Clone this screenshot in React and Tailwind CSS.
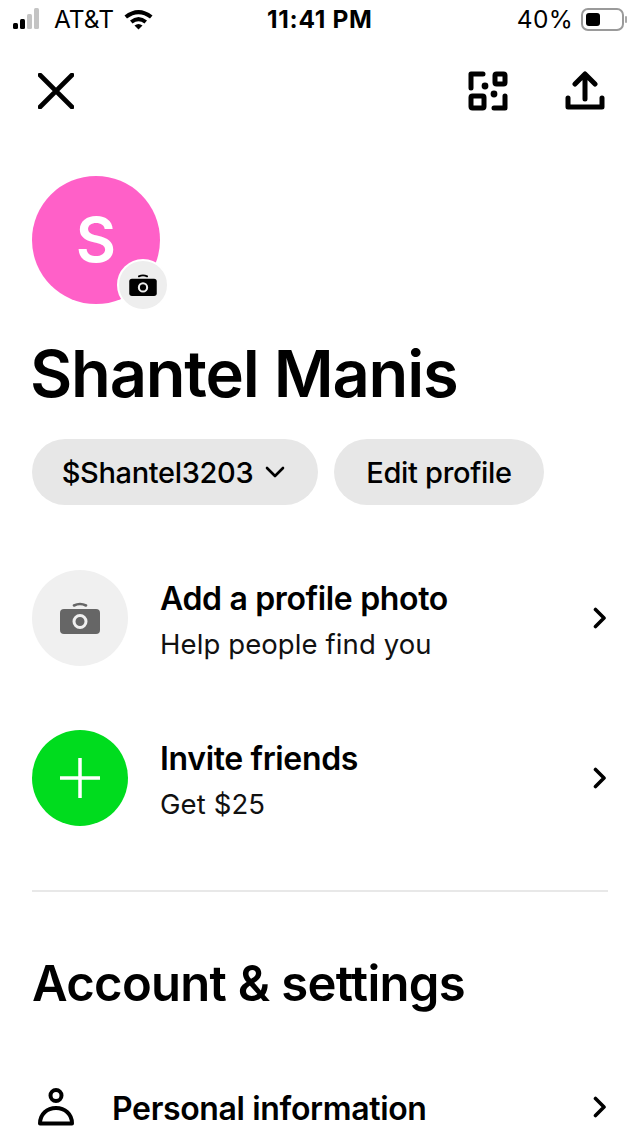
function Camera({ className, color, lens }) {
  return (
    <svg viewBox="0 0 40 32" className={className}>
      <path d="M14 3.5 Q20 0.5 26 3.5" fill="none" stroke={color} strokeWidth="2.6" strokeLinecap="round" />
      <rect x="0" y="7" width="40" height="25" rx="4" fill={color} />
      <circle cx="20" cy="19.5" r="6" fill="none" stroke={lens} strokeWidth="3" />
    </svg>
  );
}

function Chevron({ className }) {
  return (
    <svg viewBox="0 0 14 22" className={className} fill="none" stroke="#000" strokeWidth="3.6" strokeLinecap="round" strokeLinejoin="round">
      <path d="M2.5 2.5 L11 11 L2.5 19.5" />
    </svg>
  );
}

function StatusBar() {
  return (
    <div className="h-[40px] px-[13px] pt-[6px] relative flex items-start justify-between text-black text-[24.5px] leading-[26px]">
      <div className="flex items-center">
        <div className="flex items-end gap-[2px] h-[22px] mb-[2px] w-[33px]">
          <span className="w-[5px] h-[6px] rounded-[1.5px] bg-black" />
          <span className="w-[5px] h-[10px] rounded-[1.5px] bg-black" />
          <span className="w-[5px] h-[15px] rounded-[1.5px] bg-[#c4c4c4]" />
          <span className="w-[5px] h-[21px] rounded-[1.5px] bg-[#c4c4c4]" />
        </div>
        <span className="ml-[8px]">AT&amp;T</span>
        <svg viewBox="0 0 30 22" className="ml-[9px] w-[31px] h-[22px]">
          <path d="M1 7.5 Q15 -3.5 29 7.5 L26.5 10.5 Q15 2 3.5 10.5 Z" fill="#000" />
          <path d="M6.5 12.5 Q15 5.5 23.5 12.5 L21 15.5 Q15 11 9 15.5 Z" fill="#000" />
          <path d="M11 17.5 Q15 14.5 19 17.5 L15 21.5 Z" fill="#000" />
        </svg>
      </div>
      <span className="absolute left-[267px] top-[6px] font-bold tracking-[0.7px] whitespace-nowrap">11:41 PM</span>
      <div className="flex items-center">
        <span className="tracking-[0.3px] mr-[8px]">40%</span>
        <div className="w-[43px] h-[23px] rounded-[7px] border-2 border-[#9a9a9a] p-[3px]">
          <div className="w-[14px] h-full rounded-[3px] bg-black" />
        </div>
        <span className="ml-[1px] w-[2px] h-[7px] rounded-full bg-[#a8a8a8]" />
      </div>
    </div>
  );
}

function TopActions() {
  return (
    <div className="h-[102px] pl-[38px] pr-[35px] flex items-center justify-between">
      <svg viewBox="0 0 36 36" className="w-[36px] h-[36px]" fill="none" stroke="#000" strokeWidth="4.6" strokeLinecap="round">
        <path d="M2 2 L34 34 M34 2 L2 34" />
      </svg>
      <div className="flex items-center gap-[57px]">
        <svg viewBox="0 0 40 40" className="w-[40px] h-[40px]" fill="none" stroke="#000" strokeWidth="5">
          <path d="M3 17 V3 H15" strokeLinejoin="round" strokeLinecap="round" />
          <circle cx="17" cy="15" r="3.4" fill="#000" stroke="none" />
          <rect x="27" y="3" width="10" height="10" rx="1.5" />
          <rect x="3" y="25" width="13" height="12" rx="1.5" />
          <circle cx="26" cy="23" r="3.4" fill="#000" stroke="none" />
          <path d="M37 25 V37 H26" strokeLinejoin="round" strokeLinecap="round" />
        </svg>
        <svg viewBox="0 0 40 40" className="w-[40px] h-[40px]" fill="none" stroke="#000" strokeWidth="5" strokeLinecap="round" strokeLinejoin="round">
          <path d="M20 28 V4 M10 13 L20 3 L30 13" />
          <path d="M3 27 V36 H37 V27" />
        </svg>
      </div>
    </div>
  );
}

function ActionRow({ circle, title, subtitle }) {
  return (
    <div className="flex items-center h-[96px]">
      {circle}
      <div className="ml-[32px] flex-1 pt-[5px]">
        <div className="text-[32px] leading-[38px] font-semibold tracking-[-0.35px] text-black">{title}</div>
        <div className="text-[27.5px] leading-[36px] mt-[8px] tracking-[0.1px] text-[#111]">{subtitle}</div>
      </div>
      <Chevron className="w-[14px] h-[22px] mr-[1px]" />
    </div>
  );
}

export default function App() {
  return (
    <div className="relative w-[640px] h-[1136px] overflow-hidden bg-white text-black font-['Inter','Liberation_Sans',sans-serif]">
      <StatusBar />
      <TopActions />
      <div className="px-[32px]">
        <div className="relative w-[128px] h-[128px] mt-[34px] rounded-full bg-[#ff60c8] flex items-center justify-center">
          <span className="text-white text-[62px] leading-none font-semibold">S</span>
          <div className="absolute left-[85px] top-[83px] w-[52px] h-[52px] rounded-full bg-[#eeeeee] border-2 border-white flex items-center justify-center">
            <Camera className="w-[28px] h-[22px]" color="#000" lens="#eeeeee" />
          </div>
        </div>

        <h1 className="mt-[32px] -ml-[2px] text-[65px] leading-[76px] font-semibold tracking-[-1.2px] whitespace-nowrap">Shantel Manis</h1>

        <div className="mt-[27px] flex gap-[16px]">
          <div className="h-[66px] w-[286px] rounded-full bg-[#e7e7e7] flex items-center justify-center text-[29px] font-medium tracking-[-0.35px]">
            <span className="-ml-[3px] pt-[2px]">$Shantel3203</span>
            <svg viewBox="0 0 20 12" className="ml-[12px] w-[20px] h-[12px]" fill="none" stroke="#000" strokeWidth="2.6" strokeLinecap="round" strokeLinejoin="round">
              <path d="M2 2 L10 10 L18 2" />
            </svg>
          </div>
          <div className="h-[66px] w-[210px] rounded-full bg-[#e7e7e7] flex items-center justify-center text-[29px] font-medium tracking-[-0.3px]">
            <span className="pt-[2px]">Edit profile</span>
          </div>
        </div>

        <div className="mt-[65px] flex flex-col gap-[64px]">
          <ActionRow
            title="Add a profile photo"
            subtitle="Help people find you"
            circle={
              <div className="w-[96px] h-[96px] rounded-full bg-[#f0f0f0] flex items-center justify-center">
                <Camera className="w-[40px] h-[32px]" color="#666666" lens="#f0f0f0" />
              </div>
            }
          />
          <ActionRow
            title="Invite friends"
            subtitle="Get $25"
            circle={
              <div className="w-[96px] h-[96px] rounded-full bg-[#00dc1e] flex items-center justify-center">
                <svg viewBox="0 0 40 40" className="w-[40px] h-[40px]" fill="none" stroke="#fff" strokeWidth="3.5">
                  <path d="M20 0 V40 M0 20 H40" />
                </svg>
              </div>
            }
          />
        </div>

        <div className="mt-[64px] h-[2px] bg-[#e8e8e8] w-[576px]" />

        <h2 className="mt-[62px] text-[49px] leading-[60px] font-semibold tracking-[-0.7px] whitespace-nowrap">Account &amp; settings</h2>

        <div className="mt-[68px] flex items-center h-[50px] pr-[1px]">
          <svg viewBox="0 0 36 38" className="w-[40px] h-[38px] ml-[4px]" fill="none" stroke="#000" strokeWidth="4" strokeLinejoin="round">
            <circle cx="18" cy="7.5" r="5.5" />
            <path d="M2 35.5 C2 26 9 20 18 20 C27 20 34 26 34 35.5 Z" />
          </svg>
          <span className="ml-[36px] pt-[3px] flex-1 text-[32px] font-semibold tracking-[-0.35px]">Personal information</span>
          <Chevron className="w-[14px] h-[22px]" />
        </div>
      </div>
    </div>
  );
}
